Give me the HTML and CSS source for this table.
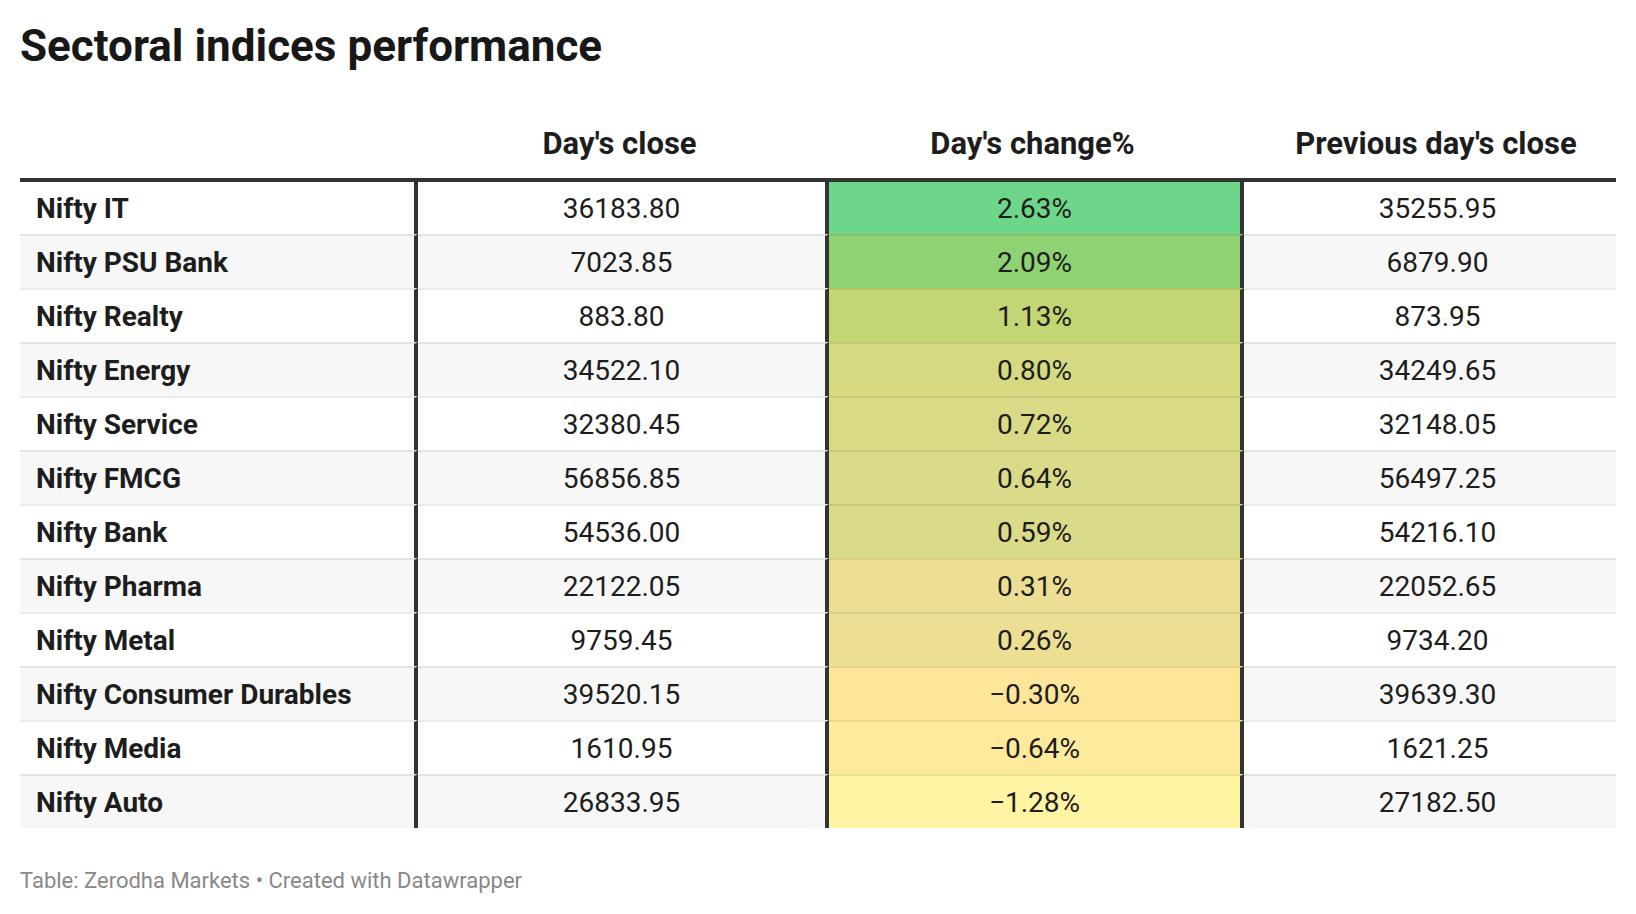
FILE: index.html
```html
<!DOCTYPE html>
<html>
<head>
<meta charset="utf-8">
<link rel="stylesheet" href="styles.css">
</head>
<body>
<div class="chart">
  <h1 class="title">Sectoral indices performance</h1>
  <table class="tbl">
    <colgroup>
      <col class="c1"><col class="c2"><col class="c3"><col class="c4">
    </colgroup>
    <thead>
      <tr><th class="name"></th><th>Day's close</th><th>Day's change%</th><th class="last">Previous day's close</th></tr>
    </thead>
    <tbody>
      <tr><td class="name">Nifty IT</td><td>36183.80</td><td class="chg" style="background:#6dd68b">2.63%</td><td class="last">35255.95</td></tr>
      <tr><td class="name">Nifty PSU Bank</td><td>7023.85</td><td class="chg" style="background:#8fd274">2.09%</td><td class="last">6879.90</td></tr>
      <tr><td class="name">Nifty Realty</td><td>883.80</td><td class="chg" style="background:#c2d674">1.13%</td><td class="last">873.95</td></tr>
      <tr><td class="name">Nifty Energy</td><td>34522.10</td><td class="chg" style="background:#d5d982">0.80%</td><td class="last">34249.65</td></tr>
      <tr><td class="name">Nifty Service</td><td>32380.45</td><td class="chg" style="background:#d8da85">0.72%</td><td class="last">32148.05</td></tr>
      <tr><td class="name">Nifty FMCG</td><td>56856.85</td><td class="chg" style="background:#dadb88">0.64%</td><td class="last">56497.25</td></tr>
      <tr><td class="name">Nifty Bank</td><td>54536.00</td><td class="chg" style="background:#dadb88">0.59%</td><td class="last">54216.10</td></tr>
      <tr><td class="name">Nifty Pharma</td><td>22122.05</td><td class="chg" style="background:#ecdf93">0.31%</td><td class="last">22052.65</td></tr>
      <tr><td class="name">Nifty Metal</td><td>9759.45</td><td class="chg" style="background:#ecdf93">0.26%</td><td class="last">9734.20</td></tr>
      <tr><td class="name">Nifty Consumer Durables</td><td>39520.15</td><td class="chg" style="background:#fde69a">−0.30%</td><td class="last">39639.30</td></tr>
      <tr><td class="name">Nifty Media</td><td>1610.95</td><td class="chg" style="background:#fdea9c">−0.64%</td><td class="last">1621.25</td></tr>
      <tr><td class="name">Nifty Auto</td><td>26833.95</td><td class="chg" style="background:#fef4a3">−1.28%</td><td class="last">27182.50</td></tr>
    </tbody>
  </table>
  <div class="footer">Table: Zerodha Markets • Created with Datawrapper</div>
</div>
</body>
</html>
```

FILE: styles.css
```css
html, body {
  margin: 0;
  padding: 0;
  background: #ffffff;
}
body {
  font-family: Roboto, "Liberation Sans", sans-serif;
  color: #1d1d1d;
}
.chart {
  padding: 20px 20px 0 20px;
}
.title {
  margin: 0;
  font-size: 44px;
  font-weight: 700;
  line-height: normal;
  color: #181818;
}
.tbl {
  margin-top: 53px;
  width: 1596px;
  table-layout: fixed;
  border-collapse: separate;
  border-spacing: 0;
  font-size: 28px;
  line-height: normal;
}
.c1 { width: 398px; }
.c2 { width: 411px; }
.c3 { width: 415px; }
.c4 { width: 372px; }
.tbl th {
  font-size: 31px;
  font-weight: 700;
  text-align: center;
  padding: 0 8px 16px 0;
  border-bottom: 4px solid #333333;
  color: #1d1d1d;
}
.tbl td {
  padding: 0;
  text-align: center;
  vertical-align: middle;
  border-right: 4px solid #333333;
  border-top: 2px solid rgba(0, 0, 0, 0.08);
  box-sizing: border-box;
  height: 54px;
}
.tbl tbody tr:first-child td {
  border-top: none;
  height: 52px;
}
.tbl tbody tr:nth-child(even) td {
  background: #f7f7f7;
}
.tbl td.name {
  text-align: left;
  font-weight: 700;
  padding-left: 16px;
}
.tbl td.last {
  border-right: none;
  padding-left: 20px;
  padding-right: 5px;
}
.tbl th.last {
  padding-left: 20px;
  padding-right: 8px;
}
.footer {
  margin-top: 40px;
  font-size: 22px;
  line-height: normal;
  color: #888888;
}
```
